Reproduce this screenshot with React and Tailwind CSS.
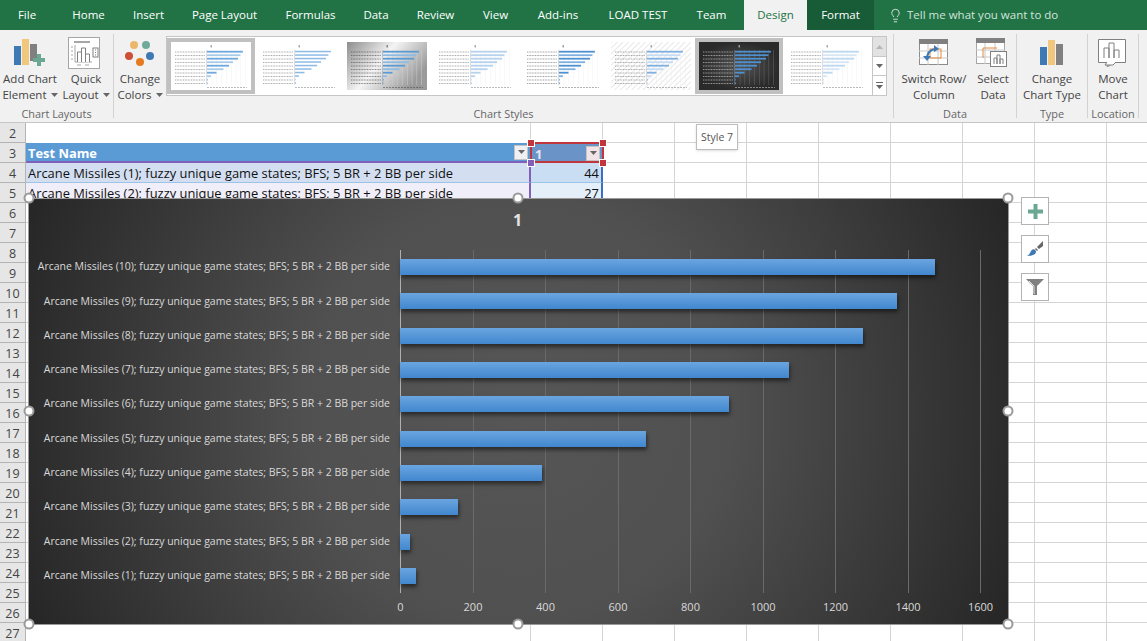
import React from 'react';
import { Lightbulb } from 'lucide-react';

const tabs = [
  { name: 'File', cls: 'w-[54px] mr-[3px]' },
  { name: 'Home', cls: 'w-[63px]' },
  { name: 'Insert', cls: 'w-[57px]' },
  { name: 'Page Layout', cls: 'w-[95px]' },
  { name: 'Formulas', cls: 'w-[77px]' },
  { name: 'Data', cls: 'w-[54px]' },
  { name: 'Review', cls: 'w-[65px]' },
  { name: 'View', cls: 'w-[55px]' },
  { name: 'Add-ins', cls: 'w-[70px]' },
  { name: 'LOAD TEST', cls: 'w-[90px]' },
  { name: 'Team', cls: 'w-[57px] mr-[4px]' },
];

const series = [
  { n: 10, v: 1473 },
  { n: 9, v: 1369 },
  { n: 8, v: 1275 },
  { n: 7, v: 1071 },
  { n: 6, v: 905 },
  { n: 5, v: 677 },
  { n: 4, v: 390 },
  { n: 3, v: 161 },
  { n: 2, v: 27 },
  { n: 1, v: 44 },
];

const rows = Array.from({ length: 26 }, (_, i) => i + 2);
const ticks = [0, 200, 400, 600, 800, 1000, 1200, 1400, 1600];

const Caret = () => (
  <svg width="7" height="4" viewBox="0 0 7 4" className="inline-block ml-[4px] mb-[2px]">
    <path d="M0 0h7L3.5 4z" fill="#666" />
  </svg>
);

const RibbonButton = ({ icon, lines, caret, cls }) => (
  <div className={`flex flex-col items-center shrink-0 ${cls}`}>
    <div className="h-[36px] flex items-center justify-center">{icon}</div>
    <div className="text-center leading-[16px] whitespace-nowrap">
      <div>{lines[0]}</div>
      <div>
        {lines[1]}
        {caret && <Caret />}
      </div>
    </div>
  </div>
);

const Group = ({ label, cls, children }) => (
  <div className={`h-[84px] my-[4px] border-r border-[#d2d2d2] shrink-0 ${cls}`}>
    <div className="h-[72px] pt-[1px] flex">{children}</div>
    <div className="h-[12px] leading-[16px] text-center text-[10.9px] text-[#666] whitespace-nowrap">{label}</div>
  </div>
);

const AddChartIcon = () => (
  <svg width="36" height="36" viewBox="0 0 36 36">
    <rect x="2" y="11" width="7" height="19" fill="#3f79b4" />
    <rect x="10" y="4" width="7" height="26" fill="#f0c77c" />
    <rect x="18" y="9" width="7" height="17" fill="#808080" />
    <path d="M21 23h4v-4h4v4h4v4h-4v4h-4v-4h-4z" fill="#6ba893" />
  </svg>
);

const QuickLayoutIcon = () => (
  <svg width="33" height="33" viewBox="0 0 33 33" className="mr-[4px]">
    <rect x="0.5" y="0.5" width="31" height="31" fill="#fff" stroke="#a6a6a6" />
    <rect x="6" y="4" width="16" height="2" fill="#a6a6a6" />
    <path d="M3 10h2M3 14h2M3 18h2M3 22h2" stroke="#a6a6a6" />
    <path d="M7 25V8M7 25h17" stroke="#a6a6a6" fill="none" />
    <path d="M9.500 25V15h4v10M13.500 25V11h4v14M17.500 25V17h4v8" stroke="#808080" fill="#fff" />
    <rect x="25" y="11" width="5" height="9" fill="#fff" stroke="#808080" />
    <path d="M27 13h1M27 15.500h1M27 18h1" stroke="#808080" />
    <path d="M9 28h4M17 28h4" stroke="#a6a6a6" />
  </svg>
);

const ColorsIcon = () => (
  <svg width="32" height="32" viewBox="0 0 32 32">
    <circle cx="10" cy="8" r="4" fill="#ecb76a" />
    <circle cx="22" cy="8" r="4" fill="#6fa999" />
    <circle cx="5" cy="19" r="4" fill="#cf4f36" />
    <circle cx="26" cy="19" r="4" fill="#3f79b4" />
    <circle cx="16" cy="25" r="4" fill="#e57b1e" />
  </svg>
);

const SwitchIcon = () => (
  <svg width="30" height="28" viewBox="0 0 30 28">
    <rect x="0.5" y="0.5" width="28" height="25" fill="#fff" stroke="#8c8c8c" />
    <rect x="0" y="0" width="29" height="5" fill="#808080" />
    <path d="M0 12h29M0 19h29M9 5v21M19 5v21" stroke="#c8c8c8" />
    <rect x="11" y="10" width="11" height="9" fill="none" stroke="#e58a3c" />
    <path d="M8 20c0-6 3-9 8-10" stroke="#3f79b4" strokeWidth="2" fill="none" />
    <path d="M4 17h8l-4 5zM15 6l5 4-5 3z" fill="#3f79b4" />
  </svg>
);

const SelectDataIcon = () => (
  <svg width="32" height="30" viewBox="0 0 32 30" className="mr-[3px] mb-[1px]">
    <rect x="0.500" y="0.500" width="28" height="25" fill="#fff" stroke="#a6a6a6" />
    <rect x="0" y="0" width="29" height="5" fill="#808080" />
    <path d="M0 12h29M0 19h29M9 5v21M19 5v21" stroke="#c8c8c8" />
    <path d="M7 20V10h14" stroke="#e58a3c" fill="none" />
    <rect x="14.500" y="13.500" width="16" height="15" fill="#fff" stroke="#808080" />
    <path d="M18 26v-6h3v6M21 26v-9h3v9M24 26v-5h3v5" stroke="#808080" fill="#fff" />
  </svg>
);

const ChartTypeIcon = () => (
  <svg width="24" height="28" viewBox="0 0 24 28">
    <rect x="0" y="8" width="7" height="18" fill="#3f79b4" />
    <rect x="8" y="1" width="7" height="25" fill="#f0c77c" />
    <rect x="16" y="5" width="7" height="21" fill="#808080" />
  </svg>
);

const MoveChartIcon = () => (
  <svg width="30" height="28" viewBox="0 0 30 28">
    <path d="M0.500 0.500h27v23H15l-3 3-3 1v-4H0.500z" fill="#fff" stroke="#808080" />
    <path d="M6 19V9h5v10M11 19V4h5v15M16 19V11h5v8" stroke="#808080" fill="#fff" />
    <path d="M9 23l-2 3h8l3-3" fill="#fff" stroke="#808080" />
  </svg>
);

const thumbs = [
  { bar: '#6ea8dc', alt: '#a9cbea', bg: '#fff', label: '#777', grid: '#f0f0f0', frame: true },
  { bar: '#8dbbe6', alt: '#8dbbe6', bg: '#fff', label: '#777', grid: '#fff' },
  { bar: '#5b9bd5', alt: '#8dbbe6', bg: 'url(#g3)', label: '#444', grid: '#ccc' },
  { bar: '#b6d2ee', alt: '#b6d2ee', bg: '#fff', label: '#777', grid: '#f0f0f0' },
  { bar: '#4f90d0', alt: '#7fb0e0', bg: '#fff', label: '#666', grid: '#f0f0f0' },
  { bar: '#7fb0e0', alt: '#c5dcf2', bg: 'url(#p6)', label: '#777', grid: '#eee' },
  { bar: '#4f90d0', alt: '#4f90d0', bg: 'url(#g7)', label: '#ddd', grid: '#666', frame: true },
  { bar: '#bcd7f0', alt: '#d6e6f5', bg: '#fff', label: '#777', grid: '#f0f0f0' },
];
const thumbValues = [1473, 1369, 1275, 1071, 905, 677, 390, 161, 27, 44];

const Thumb = ({ t, i }) => (
  <div className={`w-[88px] h-[56px] mt-[1px] p-[4px] shrink-0 overflow-hidden ${t.frame ? 'bg-[#c0c0c0]' : ''}`}>
    <svg width="80" height="48" viewBox="0 0 80 48" className="block">
      <defs>
        <linearGradient id="g3" x1="0" x2="1" y1="0" y2="0.500">
          <stop offset="0" stopColor="#8c8c8c" />
          <stop offset="0.500" stopColor="#f4f4f4" />
          <stop offset="1" stopColor="#9a9a9a" />
        </linearGradient>
        <radialGradient id="g7">
          <stop offset="0" stopColor="#555" />
          <stop offset="1" stopColor="#2a2a2a" />
        </radialGradient>
        <pattern id="p6" width="4" height="4" patternUnits="userSpaceOnUse" patternTransform="rotate(45)">
          <rect width="4" height="4" fill="#fff" />
          <rect width="1" height="4" fill="#e8e8e8" />
        </pattern>
      </defs>
      <rect width="80" height="48" fill={t.bg} />
      <rect x="39.500" y="3" width="1.500" height="2.500" fill={t.label} opacity="0.6" />
      {[1, 2, 3, 4, 5, 6, 7, 8].map((k) => (
        <rect key={k} x={36 + k * 4.800} y="8" width="0.500" height="35" fill={t.grid} />
      ))}
      <rect x="35.500" y="8" width="0.500" height="35" fill={t.label} opacity="0.5" />
      {thumbValues.map((v, k) => (
        <g key={k}>
          <line x1="4" x2="34" y1={10 + k * 3.500} y2={10 + k * 3.500} stroke={t.label} strokeWidth="1" strokeDasharray="1 0.600" opacity="0.6" />
          <rect x="36" y={8.800 + k * 3.500} width={(v / 1600) * 39} height={i === 1 ? 1.500 : 1.800} fill={k % 2 ? t.alt : t.bar} />
        </g>
      ))}
      <line x1="36" x2="76" y1="45.500" y2="45.500" stroke={t.label} strokeWidth="1" strokeDasharray="2 1" opacity="0.5" />
    </svg>
  </div>
);

const Handle = ({ cls }) => (
  <div className={`absolute w-[11px] h-[11px] rounded-full bg-white border-2 border-[#9a9a9a] -translate-x-1/2 -translate-y-1/2 ${cls}`} />
);

const Square = ({ cls }) => (
  <div className={`absolute w-[8px] h-[8px] border border-white -translate-x-1/2 -translate-y-1/2 ${cls}`} />
);

const FilterButton = ({ cls }) => (
  <div className={`w-[14px] h-[15px] border border-[#c4c4c4] flex items-center justify-center shrink-0 ${cls}`}>
    <svg width="7" height="4" viewBox="0 0 7 4">
      <path d="M0 0h7L3.500 4z" fill="#666" />
    </svg>
  </div>
);

const SideButton = ({ children }) => (
  <div className="w-[28px] h-[28px] bg-white border border-[#b3b3b3] flex items-center justify-center">{children}</div>
);

export default function App() {
  return (
    <div className="relative w-[1147px] h-[641px] overflow-hidden bg-white text-[11.5px] text-[#444]" style={{ fontFamily: '"Open Sans", sans-serif' }}>
      {/* tabs */}
      <div className="flex h-[30px] bg-[#217346] text-white text-[11.5px] leading-[30px]">
        {tabs.map((t) => (
          <div key={t.name} className={`text-center whitespace-nowrap ${t.cls}`}>{t.name}</div>
        ))}
        <div className="w-[63px] bg-[#f1f1f1] text-[#217346] text-center">Design</div>
        <div className="w-[67px] bg-[#185c37] text-center">Format</div>
        <div className="flex items-center ml-[14px] gap-[4px] text-[#d3e3da]">
          <Lightbulb size={15} strokeWidth={1.5} />
          <span>Tell me what you want to do</span>
        </div>
      </div>

      {/* ribbon */}
      <div className="flex h-[93px] bg-[#f1f1f1] border-b border-[#c6c6c6]">
        <Group label="Chart Layouts" cls="w-[114px]">
          <RibbonButton icon={<AddChartIcon />} lines={['Add Chart', 'Element']} caret cls="w-[60px]" />
          <RibbonButton icon={<QuickLayoutIcon />} lines={['Quick', 'Layout']} caret cls="w-[52px]" />
        </Group>
        <div className="h-[84px] my-[4px] w-[780px] border-r border-[#d2d2d2] shrink-0">
          <div className="h-[72px] flex">
            <RibbonButton icon={<ColorsIcon />} lines={['Change', 'Colors']} caret cls="w-[52px] pt-[1px]" />
            <div className="flex w-[721px] h-[60px] mt-[2px] bg-white border border-[#c6c6c6]">
              {thumbs.map((t, i) => (
                <Thumb key={i} t={t} i={i} />
              ))}
              <div className="flex flex-col w-[15px] ml-[1px] border-l border-[#c6c6c6]">
                <div className="h-[20px] bg-[#e2e2e2] border-b border-[#c6c6c6] flex items-center justify-center">
                  <svg width="7" height="4" viewBox="0 0 7 4"><path d="M3.500 0L7 4H0z" fill="#b5b5b5" /></svg>
                </div>
                <div className="h-[19px] border-b border-[#c6c6c6] flex items-center justify-center">
                  <svg width="7" height="4" viewBox="0 0 7 4"><path d="M0 0h7L3.500 4z" fill="#666" /></svg>
                </div>
                <div className="flex-1 flex flex-col items-center justify-center gap-[2px]">
                  <div className="w-[7px] h-px bg-[#666]" />
                  <svg width="7" height="4" viewBox="0 0 7 4" className="block"><path d="M0 0h7L3.500 4z" fill="#666" /></svg>
                </div>
              </div>
            </div>
          </div>
          <div className="h-[12px] leading-[16px] text-center text-[10.9px] text-[#666]">Chart Styles</div>
        </div>
        <Group label="Data" cls="w-[123px]">
          <RibbonButton icon={<SwitchIcon />} lines={['Switch Row/', 'Column']} cls="w-[80px]" />
          <RibbonButton icon={<SelectDataIcon />} lines={['Select', 'Data']} cls="w-[38px]" />
        </Group>
        <Group label="Type" cls="w-[71px]">
          <RibbonButton icon={<ChartTypeIcon />} lines={['Change', 'Chart Type']} cls="w-[70px]" />
        </Group>
        <Group label="Location" cls="w-[51px]">
          <RibbonButton icon={<MoveChartIcon />} lines={['Move', 'Chart']} cls="w-[50px]" />
        </Group>
      </div>

      {/* sheet */}
      <div className="relative">
        {rows.map((r) => (
          <div key={r} className="flex h-[20px]">
            <div className="w-[26px] shrink-0 bg-[#e6e6e6] border-b border-r border-[#b4b4b4] text-center text-[12.5px] leading-[21px] text-[#444]">{r}</div>
            {r === 3 ? (
              <>
                <div className="w-[505px] shrink-0 bg-[#5b9bd5] border-b-2 border-[#8060b8] flex items-center justify-between pl-[2px] pr-[3px]">
                  <span className="text-white font-bold text-[12.9px] leading-[20px] mt-[2px]">Test Name</span>
                  <FilterButton cls="bg-[#eef0f4]" />
                </div>
                <div className="w-[72px] shrink-0 bg-[#6a94c8] flex items-center justify-between pl-[4px] pr-[3px]">
                  <span className="text-[#e6e6f0] font-bold text-[12.9px] leading-[20px] mt-[1px]">1</span>
                  <FilterButton cls="bg-[#f2e4e6]" />
                </div>
              </>
            ) : r === 4 || r === 5 ? (
              <>
                <div className={`w-[505px] shrink-0 pl-[2px] text-[12.9px] leading-[21px] text-[#111] border-r-2 border-[#8060b8] whitespace-nowrap ${r === 4 ? 'bg-[#d3dff1] border-b border-b-[#9dc3e6]' : 'bg-[#f0eef8]'}`}>
                  Arcane Missiles ({r - 3}); fuzzy unique game states; BFS; 5 BR + 2 BB per side
                </div>
                <div className={`w-[72px] shrink-0 pr-[2px] text-right text-[12.9px] leading-[21px] text-[#111] border-r-2 border-[#3a6fc4] ${r === 4 ? 'bg-[#c9def2] border-b border-b-[#9dc3e6]' : 'bg-[#e4eff9]'}`}>
                  {r === 4 ? 44 : 27}
                </div>
              </>
            ) : (
              <>
                <div className={`w-[505px] shrink-0 border-r border-[#d4d4d4] ${r === 2 ? 'border-b-0' : 'border-b'}`} />
                <div className="w-[72px] shrink-0 border-b border-r border-[#d4d4d4]" />
              </>
            )}
            {[0, 1, 2, 3, 4, 5, 6, 7].map((c) => (
              <div key={c} className="w-[72px] shrink-0 border-b border-r border-[#d4d4d4]" />
            ))}
          </div>
        ))}

        {/* red selection round the series name cell */}
        <div className="absolute left-[530px] top-[19px] w-[74px] h-[21px] border-2 border-[#c0363c]" />
        <Square cls="left-[531px] top-[20px] bg-[#c0363c]" />
        <Square cls="left-[603px] top-[20px] bg-[#c0363c]" />
        <Square cls="left-[603px] top-[40px] bg-[#c0363c]" />
        <Square cls="left-[531px] top-[40px] bg-[#8060b8]" />

        {/* tooltip */}
        <div className="absolute left-[696px] top-[1px] w-[42px] h-[26px] bg-white border border-[#bdbdbd] shadow-sm text-[10.5px] leading-[24px] text-center text-[#555] whitespace-nowrap">Style 7</div>

        {/* chart */}
        <div className="absolute left-[28px] top-[75px] w-[981px] h-[427px] border border-[#9a9a9a] bg-[radial-gradient(circle_at_center,#565656_0%,#505050_40%,#262626_100%)] flex flex-col">
          <div className="h-[51px] pt-[10px] pr-[2px] text-center text-[16px] leading-[22px] font-bold text-[#e4e4e4]">1</div>
          <div className="relative h-[343px] flex flex-col">
            <div className="absolute left-[371px] top-0 bottom-0 w-[581px] flex justify-between">
              {ticks.map((t) => (
                <div key={t} className={`w-px ${t === 0 ? 'bg-[#b0b0b0]' : 'bg-[#6a6a6a]'}`} />
              ))}
            </div>
            {series.map((s) => (
              <div key={s.n} className="relative flex-1 flex items-center">
                <div className="w-[361px] text-right text-[10.5px] text-[#d9d9d9] whitespace-nowrap">
                  Arcane Missiles ({s.n}); fuzzy unique game states; BFS; 5 BR + 2 BB per side
                </div>
                <div className="w-[581px] ml-[10px]">
                  <div
                    className="h-[16px] bg-gradient-to-b from-[#6aa5e0] to-[#4187ce] shadow-[1px_3px_4px_rgba(0,0,0,0.5)]"
                    style={{ width: `${(s.v / 1600) * 100}%` }}
                  />
                </div>
              </div>
            ))}
          </div>
          <div className="ml-[371px] mt-[7px] w-[581px] flex justify-between text-[11px] leading-[14px] text-[#d9d9d9]">
            {ticks.map((t) => (
              <div key={t} className="w-px flex justify-center">
                <span>{t}</span>
              </div>
            ))}
          </div>
        </div>

        <Handle cls="left-[29px] top-[75px]" />
        <Handle cls="left-[518px] top-[75px]" />
        <Handle cls="left-[1008px] top-[75px]" />
        <Handle cls="left-[29px] top-[288px]" />
        <Handle cls="left-[1008px] top-[288px]" />
        <Handle cls="left-[29px] top-[501px]" />
        <Handle cls="left-[518px] top-[501px]" />
        <Handle cls="left-[1008px] top-[501px]" />

        {/* chart side buttons */}
        <div className="absolute left-[1021px] top-[74px] flex flex-col gap-[10px]">
          <SideButton>
            <svg width="15" height="15" viewBox="0 0 15 15"><path d="M5.500 0h4v5.500H15v4H9.500V15h-4V9.500H0v-4h5.500z" fill="#6ba893" /></svg>
          </SideButton>
          <SideButton>
            <svg width="18" height="18" viewBox="0 0 18 18">
              <path d="M17 1v5l-4 3-2-2z" fill="#666" />
              <path d="M10 8l2 2-1 1-2-2z" fill="#666" />
              <path d="M8.500 9.500c2 1 2 3 .5 4.500-1 1-5 2-8 2 2-1 3-3 4-5 1-1.500 2.500-2 3.500-1.500z" fill="#3f79b4" />
            </svg>
          </SideButton>
          <SideButton>
            <svg width="18" height="18" viewBox="0 0 18 18">
              <path d="M0 1h18l-7 7v9H7V8z" fill="#808080" />
              <path d="M3 3l5 5v8" stroke="#fff" strokeWidth="0.800" fill="none" />
            </svg>
          </SideButton>
        </div>
      </div>
    </div>
  );
}
